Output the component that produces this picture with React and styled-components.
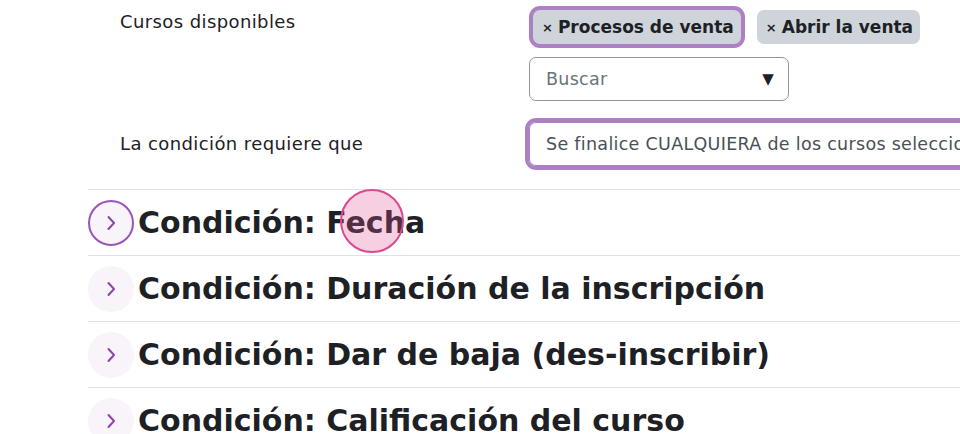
import React from "react";
import styled, { createGlobalStyle } from "styled-components";

const Global = createGlobalStyle`
  html, body { margin: 0; padding: 0; background: #fff; }
  body { font-family: "DejaVu Sans", "Noto Sans", sans-serif; color: #1d2125; overflow: hidden; }
`;

const Page = styled.div`
  width: 960px;
  height: 434px;
  overflow: hidden;
  position: relative;
  padding-left: 88px;
  box-sizing: border-box;
`;

const FormRow = styled.div`
  display: grid;
  grid-template-columns: 409px 1fr;
  padding-left: 32px;
  padding-top: ${(p) => p.$top || 0}px;
`;

const Label = styled.div`
  font-size: 18px;
  letter-spacing: 0.4px;
  line-height: 24px;
  padding-top: ${(p) => p.$pad || 0}px;
  color: #1d2125;
`;

const Controls = styled.div`
  display: flex;
  flex-direction: column;
  gap: 13px;
  min-width: 0;
`;

const Badges = styled.div`
  display: flex;
  gap: 16px;
  align-items: center;
  padding: 10px 0 0 4px;
`;

const Badge = styled.span`
  display: inline-flex;
  align-items: center;
  gap: 5px;
  height: 34px;
  padding: 0 7px 0 9px;
  border-radius: 7px;
  background: #ced4da;
  font-weight: 700;
  font-size: 17px;
  color: #1d2125;
  box-sizing: border-box;
  box-shadow: ${(p) => (p.$focus ? "0 0 0 4px #ad80c6" : "none")};
`;

const Times = styled.span`
  font-size: 13px;
  font-weight: 700;
`;

const Select = styled.div`
  display: flex;
  align-items: center;
  justify-content: space-between;
  box-sizing: border-box;
  width: ${(p) => p.$w};
  height: ${(p) => p.$h}px;
  padding: 0 14px 0 16px;
  border: 1px solid #8f959e;
  border-radius: 7px;
  font-size: 17.5px;
  letter-spacing: 0.3px;
  color: ${(p) => p.$color || "#495057"};
  white-space: nowrap;
  overflow: hidden;
  box-shadow: ${(p) => (p.$focus ? "0 0 0 4px #ad80c6" : "none")};
  ${(p) => p.$focus && "border-color: #ad80c6;"}
`;

const Arrow = styled.span`
  font-size: 15px;
  color: #1d2125;
`;

const ConditionSelectWrap = styled.div`
  padding: 4px 0 0 0;
  margin-right: -300px;
`;

const Sections = styled.div`
  margin-top: 23px;
`;

const Section = styled.div`
  border-top: 1px solid #dee2e6;
  height: 65px;
  display: flex;
  align-items: center;
  gap: 4px;
`;

const Toggle = styled.span`
  flex: none;
  width: 46px;
  height: 46px;
  border-radius: 50%;
  background: #f8f4fa;
  box-sizing: border-box;
  border: ${(p) => (p.$focus ? "2px solid #9856b8" : "none")};
  display: flex;
  align-items: center;
  justify-content: center;
`;

const Heading = styled.h3`
  margin: 0;
  font-size: 30px;
  font-weight: 700;
  color: #1d2125;
  white-space: nowrap;
`;

const ClickDot = styled.div`
  position: absolute;
  left: 340px;
  top: 189px;
  width: 64px;
  height: 64px;
  border-radius: 50%;
  box-sizing: border-box;
  border: 2px solid #d9498f;
  background: rgba(222, 85, 150, 0.28);
  pointer-events: none;
`;

const Chevron = () => (
  <svg width="14" height="16" viewBox="0 0 14 16">
    <path d="M4.5 2 L10 8 L4.5 14" fill="none" stroke="#8e44ad" strokeWidth="2" strokeLinecap="round" strokeLinejoin="round" />
  </svg>
);

const sections = [
  "Condición: Fecha",
  "Condición: Duración de la inscripción",
  "Condición: Dar de baja (des-inscribir)",
  "Condición: Calificación del curso",
];

export default function App() {
  return (
    <>
      <Global />
      <Page>
        <FormRow>
          <Label $pad={10}>Cursos disponibles</Label>
          <Controls>
            <Badges>
              <Badge $focus><Times>×</Times>Procesos de venta</Badge>
              <Badge><Times>×</Times>Abrir la venta</Badge>
            </Badges>
            <Select $w="260px" $h={44} $color="#6a737b">
              Buscar
              <Arrow>▼</Arrow>
            </Select>
          </Controls>
        </FormRow>
        <FormRow $top={17}>
          <Label $pad={14}>La condición requiere que</Label>
          <ConditionSelectWrap>
            <Select $w="700px" $h={44} $focus>
              Se finalice CUALQUIERA de los cursos seleccionados
            </Select>
          </ConditionSelectWrap>
        </FormRow>
        <Sections>
          {sections.map((s, i) => (
            <Section key={s}>
              <Toggle $focus={i === 0}><Chevron /></Toggle>
              <Heading>{s}</Heading>
            </Section>
          ))}
        </Sections>
        <ClickDot />
      </Page>
    </>
  );
}
